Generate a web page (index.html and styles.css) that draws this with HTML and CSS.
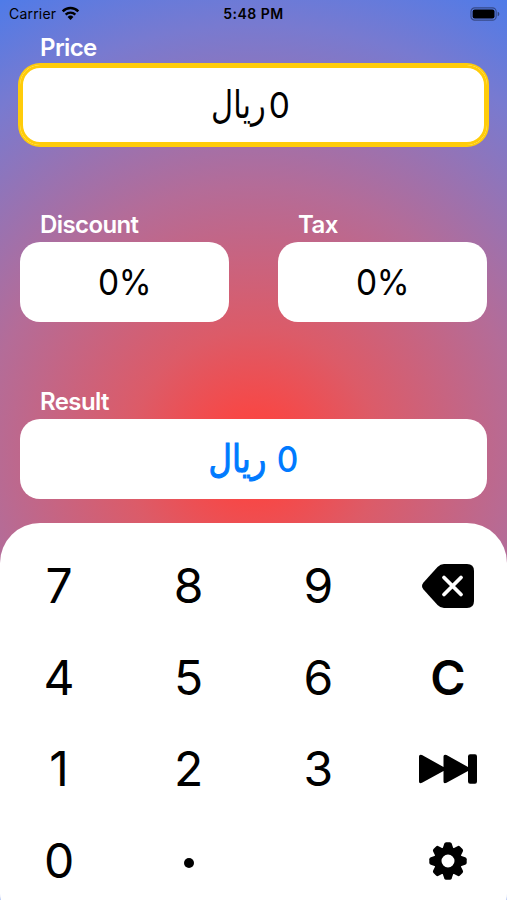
FILE: index.html
```
<!DOCTYPE html>
<html lang="en">
<head>
  <meta charset="UTF-8">
  <meta name="viewport" content="width=device-width, initial-scale=1.0">
  <title>Discount Calculator</title>
  <link rel="stylesheet" href="styles.css">
</head>
<body>

  <div class="app">
    <header class="status-bar">
      <div class="carrier">
        <span>Carrier</span>
        <svg class="wifi" viewBox="0 0 20 15">
          <path d="M1.8 5.2a11.6 11.6 0 0 1 16.4 0" fill="none" stroke="#000" stroke-width="2.6"/>
          <path d="M4.9 8.6a7.3 7.3 0 0 1 10.2 0" fill="none" stroke="#000" stroke-width="2.5"/>
          <path d="M10 14.4 6.9 11.2a4.4 4.4 0 0 1 6.2 0z"/>
        </svg>
      </div>
      <div class="time">5:48 PM</div>
      <svg class="battery" viewBox="0 0 32 14">
        <rect x="1" y=".7" width="26" height="12.6" rx="3.8" fill="none" stroke="#000" stroke-opacity=".4" stroke-width="1.2"/>
        <rect x="2.7" y="2.3" width="22.6" height="9.4" rx="2.2"/>
        <path d="M28.6 4.7a2.4 2.4 0 0 1 0 4.6z" fill-opacity=".45"/>
      </svg>
    </header>

    <main class="fields">
      <div class="field">
        <div class="label">Price</div>
        <div class="value active" dir="rtl"><span class="number">0</span><span class="currency">ریال</span></div>
      </div>
      <div class="row">
        <div class="field">
          <div class="label">Discount</div>
          <div class="value"><span class="number">0%</span></div>
        </div>
        <div class="field">
          <div class="label">Tax</div>
          <div class="value"><span class="number">0%</span></div>
        </div>
      </div>
      <div class="field">
        <div class="label">Result</div>
        <div class="value result" dir="rtl"><span class="number">0</span> <span class="currency">ریال</span></div>
      </div>
    </main>

    <div class="keypad">
      <button type="button">7</button>
      <button type="button">8</button>
      <button type="button">9</button>
      <button type="button" aria-label="Delete">
        <svg class="icon-delete" viewBox="0 0 52 44">
          <path d="M22 0H45Q52 0 52 7V37Q52 44 45 44H22Q18.500 44 15.500 41L1.500 25.500Q-1.500 22 1.500 18.500L15.500 3Q18.500 0 22 0z"/>
          <path d="M22 13.500l17 17M39 13.500L22 30.500" stroke="#fff" stroke-width="3.800" stroke-linecap="round"/>
        </svg>
      </button>
      <button type="button">4</button>
      <button type="button">5</button>
      <button type="button">6</button>
      <button type="button" class="clear">C</button>
      <button type="button">1</button>
      <button type="button">2</button>
      <button type="button">3</button>
      <button type="button" aria-label="Next">
        <svg class="icon-next" viewBox="0 0 58 30">
          <path d="M0 2.500Q0 0 3 1L24.500 13V2.500Q24.500 0 27.500 1L49 13V2.500Q49 .300 51.200 .300H56Q58 .300 58 2.500V27.500Q58 29.700 56 29.700H51.200Q49 29.700 49 27.500V17L27.500 28.800Q24.500 30 24.500 27.500V17L3 28.800Q0 30 0 27.500z"/>
        </svg>
      </button>
      <button type="button">0</button>
      <button type="button" aria-label="Decimal point"><span class="dot"></span></button>
      <span></span>
      <button type="button" aria-label="Settings">
        <svg class="icon-gear" viewBox="-19 -19 38 38">
          <g id="teeth">
            <path id="tooth" d="M-5.500-12L-3.800-17.200Q-3.300-18.700-1.800-18.700H1.800Q3.300-18.700 3.800-17.200L5.500-12z"/>
            <use href="#tooth" transform="rotate(45)"/>
            <use href="#tooth" transform="rotate(90)"/>
            <use href="#tooth" transform="rotate(135)"/>
          </g>
          <use href="#teeth" transform="rotate(180)"/>
          <circle r="10.300" fill="none" stroke="#000" stroke-width="7.600"/>
        </svg>
      </button>
    </div>
  </div>

</body>
</html>
```
FILE: styles.css
```
body {
  margin: 0;
  font-family: Inter, "DejaVu Sans", sans-serif;
  color: #000;
}

.app {
  height: 900px;
  overflow: hidden;
  display: flex;
  flex-direction: column;
  background: radial-gradient(circle 520px at 50% 455px, #fb4340 0, #f84745 40px, #dc5b68 125px, #b46c98 270px, #787ad0 430px, #4f7be8 520px);
}

.status-bar {
  height: 28px;
  flex-shrink: 0;
  box-sizing: border-box;
  padding: 0 6px 1px 9px;
  display: grid;
  grid-template-columns: 1fr auto 1fr;
  align-items: center;
  font-size: 14px;
  letter-spacing: 0.2px;
}

.carrier {
  display: flex;
  align-items: center;
  gap: 5px;
}

.wifi {
  width: 19px;
  height: 15px;
}

.time {
  font-weight: 600;
  letter-spacing: 0.5px;
  margin-right: 3px;
}

.battery {
  width: 31px;
  height: 14px;
  justify-self: end;
}

.fields {
  height: 495px;
  flex-shrink: 0;
  padding: 0 20px;
  display: flex;
  flex-direction: column;
  gap: 60px;
}

.row {
  display: flex;
  gap: 49px;
}

.row .field {
  flex: 1;
}

.label {
  height: 37px;
  line-height: 40px;
  padding-left: 20px;
  color: #fff;
  font-size: 24px;
  font-weight: 600;
  letter-spacing: -0.6px;
}

.field {
  height: 117px;
}

.value {
  height: 80px;
  display: flex;
  align-items: center;
  justify-content: center;
  background-color: #fff;
  border-radius: 20px;
  font-size: 36px;
  white-space: pre;
}

.active {
  box-sizing: border-box;
  padding-right: 8px;
  box-shadow: 0 0 0 2px #ffcc0a, inset 0 0 0 3px #ffcc0a;
}

.number {
  letter-spacing: -0.5px;
  transform: scaleX(0.93);
}

.result {
  color: #007aff;
  gap: 10px;
}

.result .number {
  font-weight: 500;
}

.currency {
  font-family: "DejaVu Sans", sans-serif;
  font-size: 35px;
  margin: 0 -2px;
  transform: scale(0.87, 1.1);
}

.result .currency {
  margin: 0 -3px;
  -webkit-text-stroke: 1px #007aff;
  transform: scale(0.92, 1.1);
}

.keypad {
  flex-shrink: 0;
  box-sizing: border-box;
  padding: 17px 0 28px;
  display: grid;
  grid-template-columns: repeat(4, 129.6px);
  grid-template-rows: repeat(4, 91.6px);
  justify-content: center;
  background-color: #fff;
  border-radius: 40px;
}

.keypad button {
  display: flex;
  align-items: center;
  justify-content: center;
  padding: 0;
  border: none;
  background: none;
  color: #000;
  font-family: inherit;
  font-size: 48px;
}

.keypad .clear {
  font-weight: 600;
}

.dot {
  width: 10px;
  height: 10px;
  margin-top: 5px;
  border-radius: 50%;
  background-color: #000;
}

.icon-delete {
  width: 52px;
  height: 44px;
}

.icon-next {
  width: 58px;
  height: 30px;
}

.icon-gear {
  width: 38px;
  height: 38px;
}
```
